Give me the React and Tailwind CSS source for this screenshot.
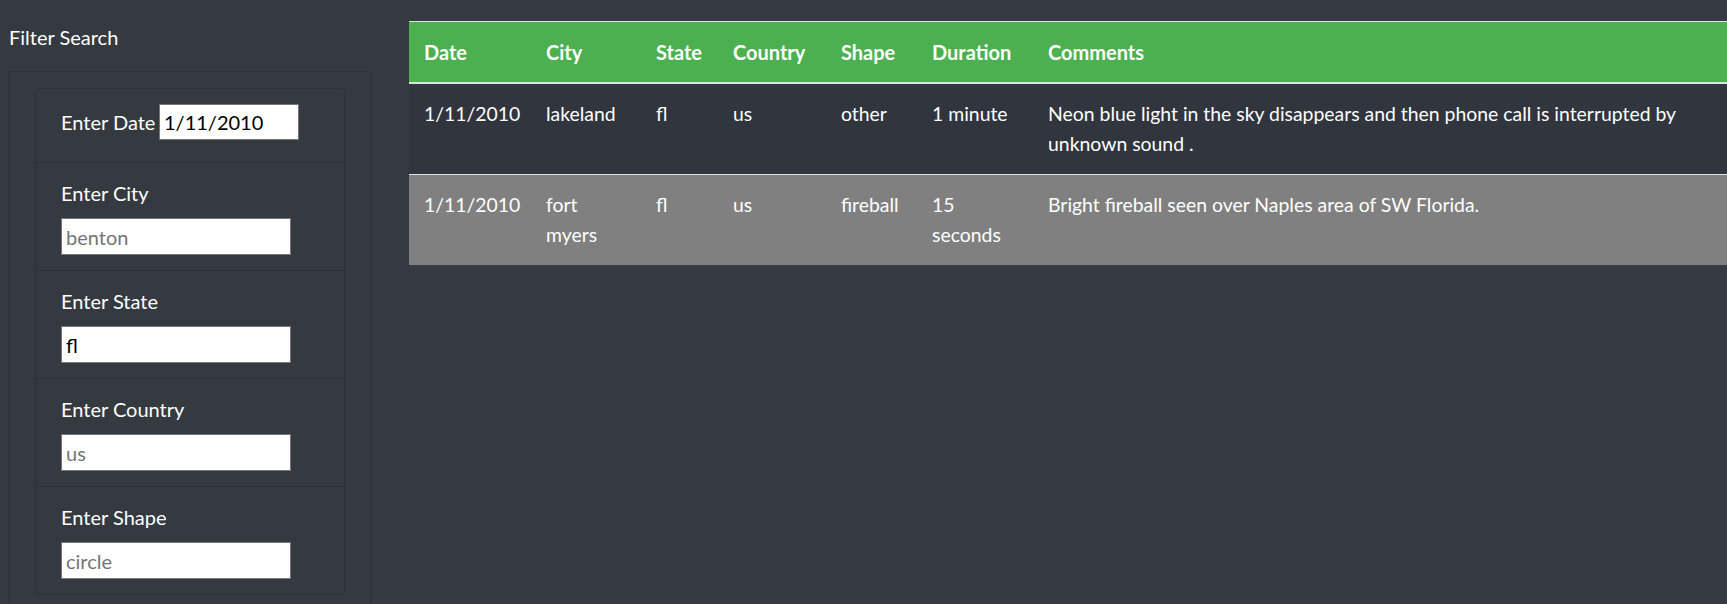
import React from "react";

const inputCls =
  "block w-[230px] h-[37px] border border-[#767676] bg-white px-[4px] text-black text-[20px] leading-[30px] placeholder:text-[#757575] outline-none [font-family:inherit]";

function Field({ label, placeholder, value }) {
  return (
    <div className="border-t border-[#2b3036] px-[25px] pt-[15px] pb-[15px]">
      <label className="block leading-[30px] mb-[10px]">{label}</label>
      <input className={inputCls} placeholder={placeholder} defaultValue={value} />
    </div>
  );
}

const rows = [
  {
    bg: "bg-[#31353d]",
    date: "1/11/2010",
    city: ["lakeland"],
    state: "fl",
    country: "us",
    shape: "other",
    duration: ["1 minute"],
    comments: ["Neon blue light in the sky disappears and then phone call is interrupted by", "unknown sound ."],
  },
  {
    bg: "bg-[#808080]",
    date: "1/11/2010",
    city: ["fort", "myers"],
    state: "fl",
    country: "us",
    shape: "fireball",
    duration: ["15", "seconds"],
    comments: ["Bright fireball seen over Naples area of SW Florida."],
  },
];

function Lines({ items }) {
  return items.map((t, i) => (
    <span key={i} className="block whitespace-nowrap">
      {t}
    </span>
  ));
}

const tdCls = "px-[15px] py-[15px] align-top text-[19.4px] leading-[30px]";

export default function App() {
  return (
    <div className="h-[604px] w-[1727px] overflow-hidden bg-[#343a40] text-white flex [font-family:'Segoe_UI',Lato,sans-serif] text-[20px] leading-[30px]">
      <aside className="w-[371px] shrink-0 pl-[9px]">
        <h5 className="pt-[22px] leading-[30px]">Filter Search</h5>
        <div className="mt-[19px] border border-[#2b3036] pt-[16px] px-[25px] pb-[40px]">
          <div className="border border-[#2b3036] rounded-[5px]">
            <div className="px-[25px] pt-[15px] pb-[22px] flex items-center">
              <label className="w-[98px] shrink-0 leading-[30px]">Enter Date</label>
              <input
                className="block w-[140px] h-[36px] border border-[#767676] bg-white px-[4px] text-black text-[20px] outline-none [font-family:inherit]"
                defaultValue="1/11/2010"
              />
            </div>
            <Field label="Enter City" placeholder="benton" />
            <Field label="Enter State" value="fl" />
            <Field label="Enter Country" placeholder="us" />
            <Field label="Enter Shape" placeholder="circle" />
          </div>
        </div>
      </aside>
      <main className="ml-[38px] mt-[21px] flex-1 min-w-0">
        <table className="w-full table-fixed border-collapse">
          <colgroup>
            <col className="w-[122px]" />
            <col className="w-[110px]" />
            <col className="w-[77px]" />
            <col className="w-[108px]" />
            <col className="w-[91px]" />
            <col className="w-[116px]" />
            <col />
          </colgroup>
          <thead>
            <tr className="bg-[#4caf50] border-t border-t-[#dee2e6] border-b-2 border-b-[#dee2e6]">
              {["Date", "City", "State", "Country", "Shape", "Duration", "Comments"].map((h) => (
                <th key={h} className="px-[15px] py-[15px] text-left font-bold leading-[30px] whitespace-nowrap">
                  {h}
                </th>
              ))}
            </tr>
          </thead>
          <tbody>
            {rows.map((r, i) => (
              <tr key={i} className={`${r.bg} ${i > 0 ? "border-t border-t-[#dee2e6]" : ""}`}>
                <td className={`${tdCls} whitespace-nowrap`}>{r.date}</td>
                <td className={tdCls}><Lines items={r.city} /></td>
                <td className={tdCls}>{r.state}</td>
                <td className={tdCls}>{r.country}</td>
                <td className={tdCls}>{r.shape}</td>
                <td className={tdCls}><Lines items={r.duration} /></td>
                <td className={tdCls}><Lines items={r.comments} /></td>
              </tr>
            ))}
          </tbody>
        </table>
      </main>
    </div>
  );
}
